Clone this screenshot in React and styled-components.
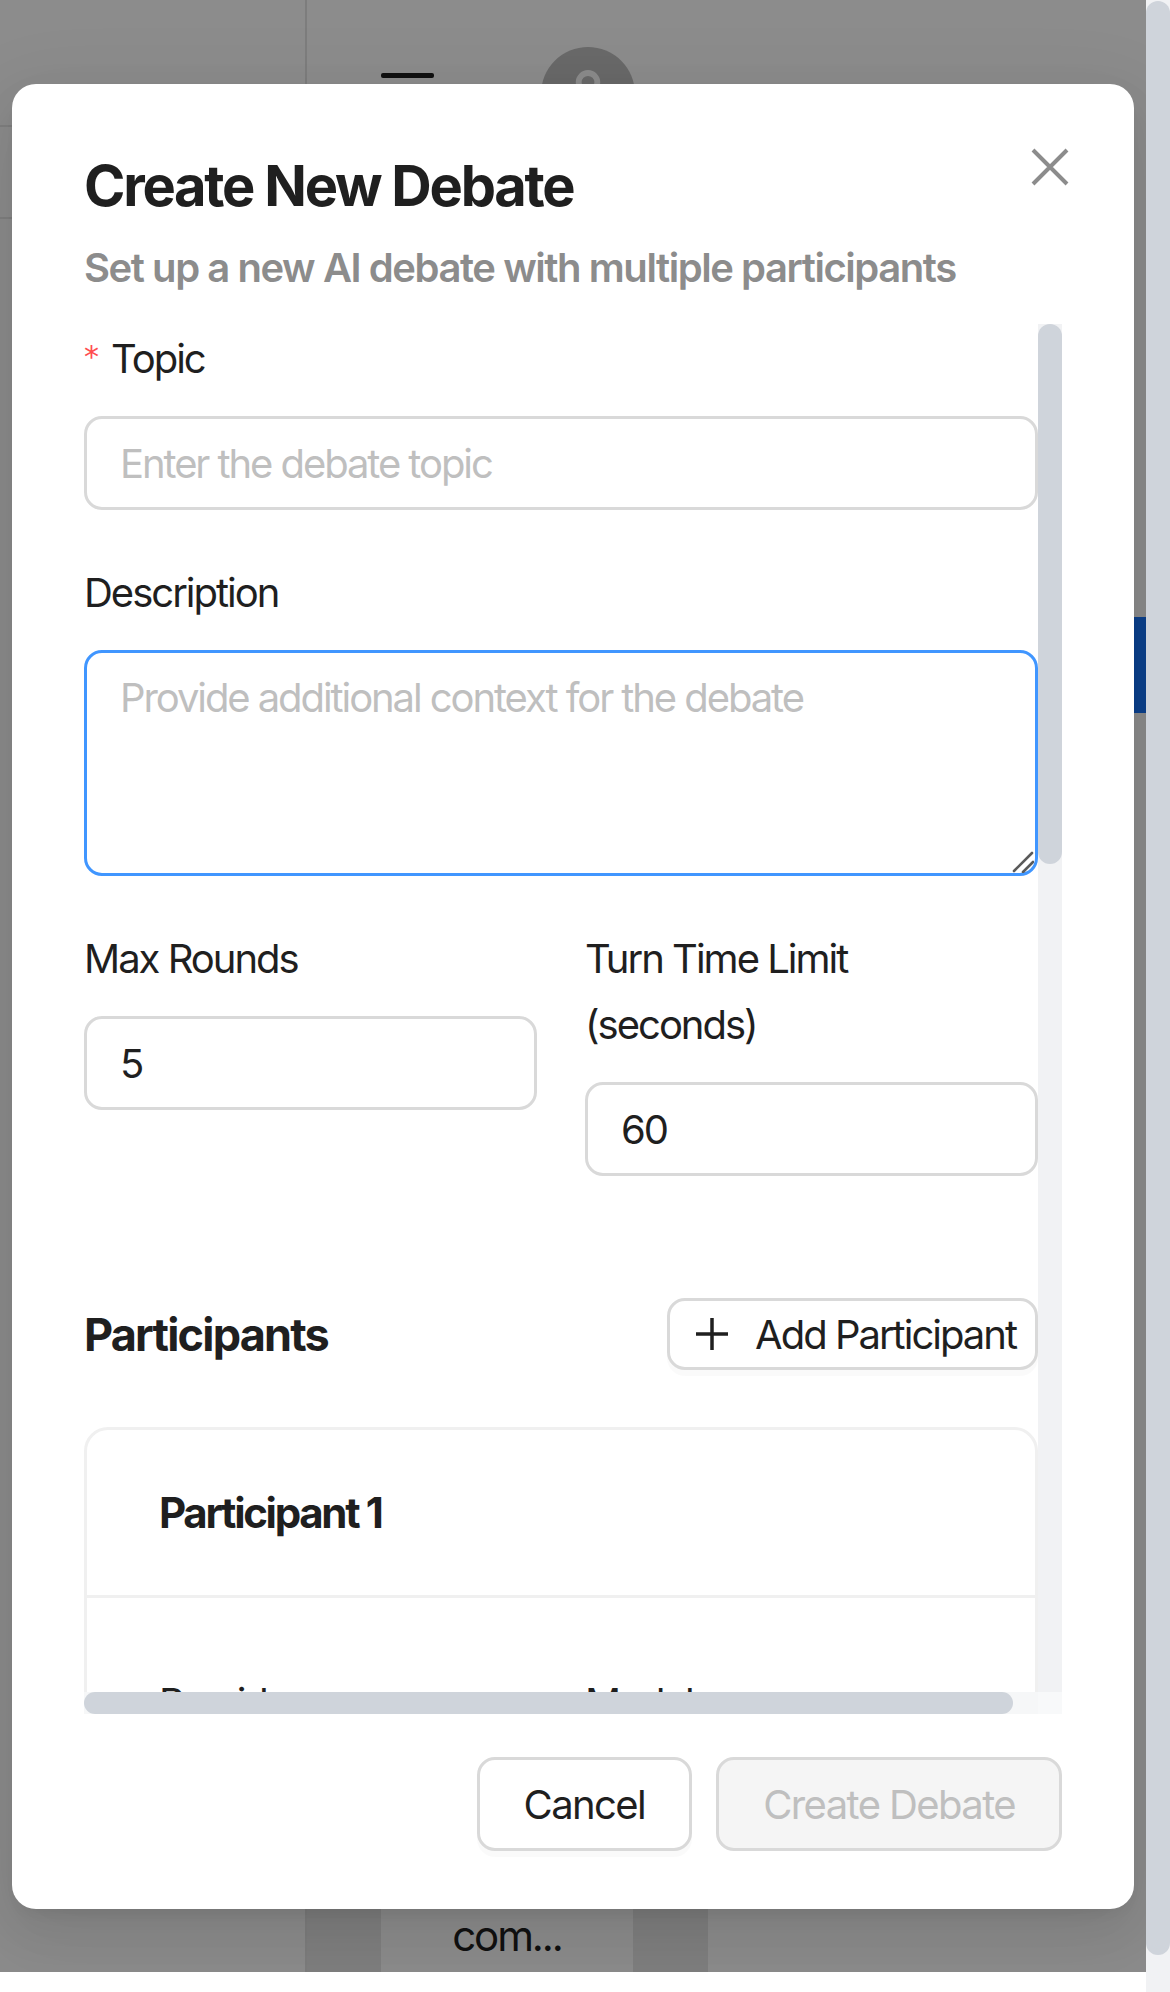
import styled, { createGlobalStyle } from "styled-components";
import { User } from "lucide-react";

const GlobalStyle = createGlobalStyle`
  * {
    box-sizing: border-box;
  }

  html,
  body {
    margin: 0;
    padding: 0;
  }

  body {
    width: 1170px;
    height: 1992px;
    overflow: hidden;
    background: #fff;
    color: #1f1f1f;
    font-family: Inter, "Noto Sans", sans-serif;
  }
`;

/* ---------- page frame ---------- */

const Screen = styled.div`
  display: flex;
  width: 1170px;
  height: 1992px;
`;

const Stage = styled.div`
  flex: 1;
  display: flex;
  flex-direction: column;
`;

const Viewport = styled.div`
  position: relative;
  height: 1972px;
  overflow: hidden;
`;

const BottomBand = styled.div`
  height: 20px;
  background: #fff;
`;

const PageScroll = styled.div`
  width: 24px;
  background: #f1f2f4;
  padding-top: 1px;
`;

const PageThumb = styled.div`
  height: 1954px;
  border-radius: 12px;
  background: #cfd4db;
`;

/* ---------- page behind the mask ---------- */

const Backdrop = styled.div`
  position: absolute;
  inset: 0;
  display: flex;
  background: #fff;
`;

const Sidebar = styled.aside`
  width: 307px;
  flex-shrink: 0;
  border-right: 2px solid #e4e4e4;
  padding-top: 125px;
`;

const SideItem = styled.div`
  height: 92px;
  border-top: 2px solid #e8e8e8;
`;

const MainArea = styled.div`
  flex: 1;
  display: flex;
  flex-direction: column;
`;

const TopBar = styled.div`
  height: 188px;
  display: flex;
  align-items: center;
  gap: 107px;
  padding-left: 74px;
`;

const MenuIcon = styled.div`
  width: 53px;
  display: flex;
  flex-direction: column;
  gap: 14px;

  span {
    height: 5px;
    border-radius: 2px;
    background: #1f1f1f;
  }
`;

const Avatar = styled.div`
  width: 94px;
  height: 94px;
  border-radius: 50%;
  background: #bfbfbf;
  display: flex;
  align-items: center;
  justify-content: center;
`;

const TableRow = styled.div`
  margin-top: auto;
  height: 68px;
  display: flex;
`;

const Cell = styled.div`
  width: ${({ $w }) => ($w ? `${$w}px` : "auto")};
  flex: ${({ $w }) => ($w ? "none" : "1")};
  background: ${({ $shade }) => ($shade ? "#e8e8e8" : "#fff")};
  display: flex;
  align-items: center;
  justify-content: center;
  padding-bottom: 6px;
  font-size: 42px;
  letter-spacing: -0.05em;
  color: #1f1f1f;
`;

const FloatTab = styled.div`
  position: absolute;
  right: 0;
  top: 617px;
  width: 48px;
  height: 96px;
  border-radius: 12px 0 0 12px;
  background: #1677ff;
`;

const Mask = styled.div`
  position: absolute;
  inset: 0;
  background: rgba(0, 0, 0, 0.45);
`;

/* ---------- modal ---------- */

const Modal = styled.div`
  position: absolute;
  left: 12px;
  top: 84px;
  width: 1122px;
  padding: 60px 72px 58px;
  border-radius: 24px;
  background: #fff;
  box-shadow: 0 18px 48px 0 rgba(0, 0, 0, 0.08),
    0 9px 18px -12px rgba(0, 0, 0, 0.12), 0 27px 84px 24px rgba(0, 0, 0, 0.05);
`;

const CloseButton = styled.button`
  position: absolute;
  top: 50px;
  right: 51px;
  width: 66px;
  height: 66px;
  padding: 0;
  border: none;
  background: transparent;
  display: flex;
  align-items: center;
  justify-content: center;
`;

const Header = styled.div`
  margin-bottom: 26px;
`;

const Title = styled.h2`
  margin: 6px 0 0;
  font-size: 56px;
  line-height: 72px;
  font-weight: 700;
  letter-spacing: -0.04em;
  color: #1f1f1f;
`;

const Subtitle = styled.p`
  margin: 16px 0 0;
  font-size: 40px;
  line-height: 60px;
  font-weight: 600;
  letter-spacing: -0.036em;
  color: #8c8c8c;
`;

/* scroll region: content plus drawn scrollbars */

const Body = styled.div`
  display: grid;
  grid-template-columns: 1fr 24px;
  grid-template-rows: 1368px 22px;
`;

const ScrollView = styled.div`
  overflow: hidden;
`;

const VTrack = styled.div`
  background: #f1f2f4;
`;

const VThumb = styled.div`
  height: 540px;
  border-radius: 12px;
  background: #cfd4db;
`;

const HTrack = styled.div`
  background: #f6f7f8;
`;

const HThumb = styled.div`
  width: 929px;
  height: 22px;
  border-radius: 11px;
  background: #cfd4db;
`;

const Corner = styled.div`
  background: #f8f9fa;
`;

const Field = styled.div`
  margin-bottom: ${({ $last }) => ($last ? 0 : 50)}px;
`;

const Label = styled.label`
  display: block;
  padding-bottom: 24px;
  font-size: 40px;
  line-height: 66px;
  letter-spacing: -0.05em;
  color: #1f1f1f;
`;

const Required = styled.span`
  margin-right: 14px;
  color: #ff4d4f;
  font-family: "DejaVu Sans", sans-serif;
  font-size: 30px;
  vertical-align: 6px;
`;

const TextInput = styled.input`
  display: block;
  width: 100%;
  height: 94px;
  padding: 0 33px;
  border: 3px solid #d9d9d9;
  border-radius: 18px;
  background: #fff;
  color: #1f1f1f;
  font-family: inherit;
  font-size: 40px;
  letter-spacing: -0.052em;
  outline: none;

  &::placeholder {
    color: #bfbfbf;
  }
`;

const AreaWrap = styled.div`
  position: relative;
`;

const TextArea = styled.textarea`
  display: block;
  width: 100%;
  height: ${({ $h }) => $h}px;
  padding: 12px 33px;
  border: 3px solid ${({ $focused }) => ($focused ? "#4096ff" : "#d9d9d9")};
  border-radius: 18px;
  background: #fff;
  color: #1f1f1f;
  font-family: inherit;
  font-size: 40px;
  line-height: 66px;
  letter-spacing: -0.052em;
  resize: none;
  outline: none;

  &::placeholder {
    color: #bfbfbf;
  }
`;

const ResizeGrip = styled.svg`
  position: absolute;
  right: 4px;
  bottom: 3px;
`;

const Row = styled.div`
  display: flex;
  margin: 0 -24px;
`;

const Col = styled.div`
  flex: 1 1 0;
  min-width: 0;
  padding: 0 24px;
`;

const SelectBox = styled.div`
  height: 94px;
  padding: 0 33px;
  border: 3px solid #d9d9d9;
  border-radius: 18px;
  display: flex;
  align-items: center;
  justify-content: space-between;
  font-size: 40px;
  letter-spacing: -0.05em;
  color: #1f1f1f;
`;

const SectionHeader = styled.div`
  margin: 72px 0 57px;
  height: 72px;
  display: flex;
  align-items: center;
  justify-content: space-between;
`;

const SectionTitle = styled.h3`
  margin: 0;
  font-size: 45px;
  font-weight: 700;
  letter-spacing: -0.04em;
  color: #1f1f1f;
`;

const AddButton = styled.button`
  height: 72px;
  padding: 0 19px 0 25px;
  display: inline-flex;
  align-items: center;
  gap: 26px;
  border: 3px solid #d9d9d9;
  border-radius: 18px;
  background: #fff;
  box-shadow: 0 6px 0 rgba(0, 0, 0, 0.02);
  color: #1f1f1f;
  font-family: inherit;
  font-size: 40px;
  letter-spacing: -0.05em;
`;

const Card = styled.div`
  border: 3px solid #f0f0f0;
  border-radius: 24px;
  margin-bottom: ${({ $last }) => ($last ? 0 : 48)}px;
`;

const CardHead = styled.div`
  height: 168px;
  padding: 0 72px;
  display: flex;
  align-items: center;
  border-bottom: 3px solid #f0f0f0;
  font-size: 42px;
  font-weight: 700;
  letter-spacing: -0.055em;
`;

const CardBody = styled.div`
  padding: 72px;
`;

const Footer = styled.div`
  margin-top: 43px;
  display: flex;
  justify-content: flex-end;
  gap: 24px;
`;

const FooterButton = styled.button`
  height: 94px;
  padding: 0 44px;
  border: 3px solid #d9d9d9;
  border-radius: 18px;
  background: ${({ disabled }) => (disabled ? "#f5f5f5" : "#fff")};
  box-shadow: ${({ disabled }) =>
    disabled ? "none" : "0 6px 0 rgba(0, 0, 0, 0.02)"};
  color: ${({ disabled }) => (disabled ? "#bfbfbf" : "#1f1f1f")};
  font-family: inherit;
  font-size: 40px;
  letter-spacing: -0.04em;
`;

const Chevron = () => (
  <svg width="30" height="30" viewBox="0 0 24 24" fill="none">
    <path d="M5 9l7 7 7-7" stroke="#bfbfbf" strokeWidth="2.4" />
  </svg>
);

const participants = [
  { name: "Participant 1", provider: "OpenAI", model: "gpt-4o", temp: "0.7" },
  { name: "Participant 2", provider: "Anthropic", model: "claude-3", temp: "0.7" },
];

const ParticipantCard = ({ p, last }) => (
  <Card $last={last}>
    <CardHead>{p.name}</CardHead>
    <CardBody>
      <Row>
        <Col>
          <Field>
            <Label>Provider</Label>
            <SelectBox>
              {p.provider}
              <Chevron />
            </SelectBox>
          </Field>
        </Col>
        <Col>
          <Field>
            <Label>Model</Label>
            <SelectBox>
              {p.model}
              <Chevron />
            </SelectBox>
          </Field>
        </Col>
      </Row>
      <Row>
        <Col>
          <Field>
            <Label>Display Name</Label>
            <TextInput defaultValue={p.name} />
          </Field>
        </Col>
        <Col>
          <Field>
            <Label>Temperature</Label>
            <TextInput defaultValue={p.temp} />
          </Field>
        </Col>
      </Row>
      <Field $last>
        <Label>System Prompt</Label>
        <TextArea $h={294} placeholder="Describe this participant's stance" />
      </Field>
    </CardBody>
  </Card>
);

const App = () => {
  return (
    <>
      <GlobalStyle />
      <Screen>
        <Stage>
          <Viewport>
            <Backdrop>
              <Sidebar>
                <SideItem />
                <SideItem />
              </Sidebar>
              <MainArea>
                <TopBar>
                  <MenuIcon>
                    <span />
                    <span />
                    <span />
                  </MenuIcon>
                  <Avatar>
                    <User size={56} color="#fff" strokeWidth={2.5} />
                  </Avatar>
                </TopBar>
                <TableRow>
                  <Cell $w={74} $shade />
                  <Cell $w={252}>com...</Cell>
                  <Cell $w={75} $shade />
                  <Cell />
                </TableRow>
              </MainArea>
              <FloatTab />
            </Backdrop>
            <Mask />

            <Modal>
              <CloseButton aria-label="Close">
                <svg width="38" height="38" viewBox="0 0 38 38">
                  <path
                    d="M2 2L36 36M36 2L2 36"
                    stroke="rgba(0,0,0,0.45)"
                    strokeWidth="4"
                  />
                </svg>
              </CloseButton>

              <Header>
                <Title>Create New Debate</Title>
                <Subtitle>Set up a new AI debate with multiple participants</Subtitle>
              </Header>

              <Body>
                <ScrollView>
                  <Field>
                    <Label>
                      <Required>*</Required>Topic
                    </Label>
                    <TextInput placeholder="Enter the debate topic" />
                  </Field>

                  <Field>
                    <Label>Description</Label>
                    <AreaWrap>
                      <TextArea
                        $h={226}
                        $focused
                        placeholder="Provide additional context for the debate"
                      />
                      <ResizeGrip width="22" height="22" viewBox="0 0 22 22">
                        <path
                          d="M2 20L20 2M11 21L21 11"
                          stroke="#5a5a5a"
                          strokeWidth="2.6"
                          strokeLinecap="round"
                        />
                      </ResizeGrip>
                    </AreaWrap>
                  </Field>

                  <Row>
                    <Col>
                      <Field>
                        <Label>Max Rounds</Label>
                        <TextInput defaultValue="5" />
                      </Field>
                    </Col>
                    <Col>
                      <Field>
                        <Label>
                          Turn Time Limit
                          <br />
                          (seconds)
                        </Label>
                        <TextInput defaultValue="60" />
                      </Field>
                    </Col>
                  </Row>

                  <SectionHeader>
                    <SectionTitle>Participants</SectionTitle>
                    <AddButton>
                      <svg width="34" height="34" viewBox="0 0 34 34">
                        <path
                          d="M17 1V33M1 17H33"
                          stroke="#1f1f1f"
                          strokeWidth="3.5"
                        />
                      </svg>
                      Add Participant
                    </AddButton>
                  </SectionHeader>

                  {participants.map((p, i) => (
                    <ParticipantCard
                      key={p.name}
                      p={p}
                      last={i === participants.length - 1}
                    />
                  ))}
                </ScrollView>
                <VTrack>
                  <VThumb />
                </VTrack>
                <HTrack>
                  <HThumb />
                </HTrack>
                <Corner />
              </Body>

              <Footer>
                <FooterButton>Cancel</FooterButton>
                <FooterButton disabled>Create Debate</FooterButton>
              </Footer>
            </Modal>
          </Viewport>
          <BottomBand />
        </Stage>
        <PageScroll>
          <PageThumb />
        </PageScroll>
      </Screen>
    </>
  );
};

export default App;
